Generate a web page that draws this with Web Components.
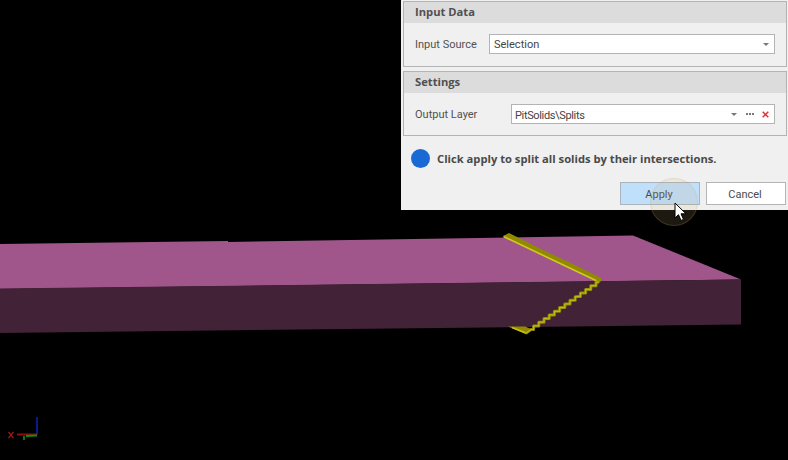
<!DOCTYPE html>
<html><head><meta charset="utf-8"><style>
html,body{margin:0;padding:0;background:#000;overflow:hidden}
</style></head><body>
<scene-view>
<tool-panel>
<group-box title="Input Data"><field-row label="Input Source" lw="74"><combo-box value="Selection"></combo-box></field-row></group-box>
<group-box title="Settings" second><field-row label="Output Layer" lw="96"><combo-box value="PitSolids\Splits" extra></combo-box></field-row></group-box>
<status-line>Click apply to split all solids by their intersections.</status-line>
<button-bar><ui-button hot>Apply</ui-button><ui-button>Cancel</ui-button></button-bar>
</tool-panel>
</scene-view>
<script>
const FONT='Roboto,"Open Sans",sans-serif', BOLD='"Open Sans","Noto Sans",sans-serif';
function def(name,html){customElements.define(name,class extends HTMLElement{
  constructor(){super();this.attachShadow({mode:'open'});}
  connectedCallback(){this.shadowRoot.innerHTML=typeof html==='function'?html(this):html;}
});}
let stair='526,333';
for(let i=0;i<13;i++){const x=531+i*5.2,y=329.5-i*3.65;stair+=` ${x.toFixed(1)},${y.toFixed(1)} ${(x+2.6).toFixed(1)},${y.toFixed(1)} ${(x+2.6).toFixed(1)},${(y-3.65).toFixed(1)}`;}
stair+=' 599,282';
def('scene-view',`<style>
:host{display:block;position:relative;width:788px;height:460px;background:#000;overflow:hidden}
svg{position:absolute;left:0;top:0}
.soft{filter:blur(.45px)}
.halo{position:absolute;left:650px;top:178px;width:48px;height:48px;border-radius:50%;background:rgba(205,170,110,.14);box-shadow:inset 0 0 0 1px rgba(200,170,120,.2)}
</style>
<svg width="788" height="460" viewBox="0 0 788 460">
<polygon points="0,244 228,241 228,242 633,235.500 741,279.500 0,289" fill="#a0568a"/>
<polygon points="0,288.500 741,279.500 741,324.500 0,333" fill="#422237"/>
<g class="soft">
<polygon points="503,236 509,233 545,251 575,265 601,278 601,281 598,284 596,280" fill="#8f8a00"/>
<polyline points="503.500,236.500 597,281" fill="none" stroke="#d4cc18" stroke-width="1.600"/>
<polygon points="508,326.500 525,326.500 531,329 526.500,334.500" fill="#8f8a00"/>
<polyline points="512,327.500 526,333" fill="none" stroke="#c8c014" stroke-width="1.500"/>
<polyline points="${stair}" fill="none" stroke="#8f8a00" stroke-width="3" stroke-linejoin="round"/>
<polyline points="${stair}" fill="none" stroke="#c0b814" stroke-width="1.200" stroke-linejoin="round"/>
</g>
<g class="soft">
<g fill="none" stroke-width="2">
<line x1="37" y1="435" x2="37" y2="417" stroke="#0a1a90"/>
<line x1="17" y1="434.500" x2="37" y2="434.500" stroke="#8c1010"/>
<line x1="26" y1="436" x2="37" y2="435.500" stroke="#0d8c20"/>
<line x1="24" y1="436" x2="24" y2="440" stroke="#0d7020"/>
</g>
<path d="M8.500 432l5 6M13.500 432l-5 6" stroke="#a01818" stroke-width="1.200" fill="none"/>
</g>
</svg>
<slot></slot>
<div class="halo"></div>
<svg width="14" height="20" viewBox="0 0 14 20" style="left:674px;top:202px"><path d="M1 1v15l3.500-3.300 2.500 5.800 2.500-1.100-2.500-5.600h5z" fill="#fff" stroke="#000" stroke-width="1"/></svg>`);
def('tool-panel',`<style>
:host{display:flex;flex-direction:column;box-sizing:border-box;position:absolute;left:401px;top:0;width:387px;height:210px;background:#f0f0f0;padding:1px 1px 0 2px;font:11px ${FONT};color:#4a4a4a}
</style><slot></slot>`);
def('group-box',h=>`<style>
:host{display:block;box-sizing:border-box;border:1px solid #b4b4b4;height:${h.hasAttribute('second')?'65':'66'}px;margin-top:${h.hasAttribute('second')?'4px':'0'}}
.h{height:21px;background:#dcdcdc;font:700 11.200px/20px ${BOLD};padding-left:11px;color:#505050}
.b{padding:0 11px}
</style><div class="h">${h.getAttribute('title')}</div><div class="b"><slot></slot></div>`);
def('field-row',h=>`<style>
:host{display:flex;align-items:center;height:42px}
.l{flex:none;width:${h.getAttribute('lw')}px;white-space:nowrap;color:#505050}
::slotted(*){flex:1}
</style><span class="l">${h.getAttribute('label')}</span><slot></slot>`);
def('combo-box',h=>{const ex=h.hasAttribute('extra');return `<style>
:host{display:flex;align-items:center;box-sizing:border-box;height:20px;border:1px solid #b4b4b4;background:#fff;padding:0 5px 0 ${ex?3:4}px;color:#444}
.v{flex:1;white-space:nowrap;${ex?'letter-spacing:-.35px;position:relative;top:1px':''}}
.ar{width:0;height:0;border:3px solid transparent;border-top:3px solid #777;border-bottom:0}
.d{margin-left:9px;display:block;margin-right:8px}
.x{display:block}
</style><span class="v">${h.getAttribute('value')}</span><span class="ar"></span>${ex?`<svg class="d" width="8" height="2" viewBox="0 0 8 2"><path d="M0 0h2v2H0zM3 0h2v2H3zM6 0h2v2H6z" fill="#777"/></svg><svg class="x" width="7" height="7" viewBox="0 0 7 7"><path d="M.7.700l5.600 5.600M6.300.700L.7 6.300" stroke="#e0303c" stroke-width="1.500" fill="none"/></svg>`:''}`;});
def('status-line',`<style>
:host{display:flex;align-items:center;gap:7px;padding:12px 0 0 8px;height:20px;font:700 11.200px ${BOLD};color:#4a4a4a;white-space:nowrap}
i{width:19px;height:19px;border-radius:50%;background:#1a6ad6;flex:none}
</style><i></i><span><slot></slot></span>`);
def('button-bar',`<style>
:host{display:flex;justify-content:flex-end;gap:6px;padding:14px 1px 0 0}
</style><slot></slot>`);
def('ui-button',h=>`<style>
:host{display:flex;align-items:center;justify-content:center;box-sizing:border-box;width:80px;height:23px;padding:1px 2px 0 0;border:1px solid ${h.hasAttribute('hot')?'#a9b4bc':'#b4b4b4'};background:${h.hasAttribute('hot')?'#bfdffb':'#fff'};color:#4a4a4a;font-size:11px}
</style><slot></slot>`);
</script>
</body></html>
